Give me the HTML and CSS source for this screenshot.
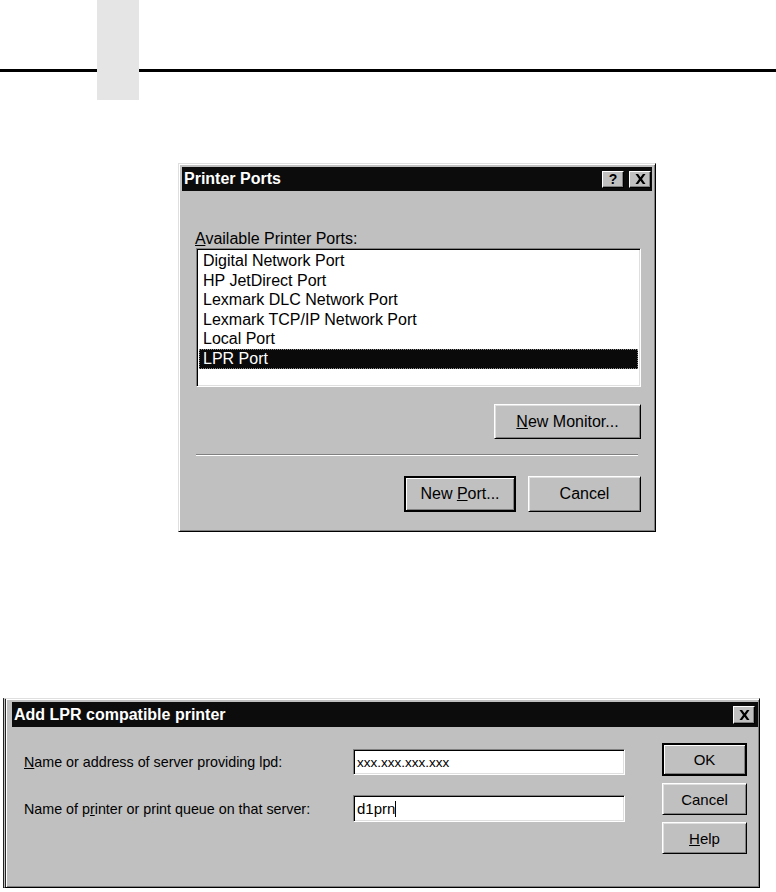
FILE: index.html
```html
<!DOCTYPE html>
<html lang="en">
<head>
  <meta charset="UTF-8">
  <title>Printer Ports</title>
  <link rel="stylesheet" href="styles.css">
</head>
<body>
  <div class="head">
    <div class="rule rule-left"></div>
    <div class="tab"></div>
    <div class="rule rule-right"></div>
  </div>

  <!-- Printer Ports dialog -->
  <div class="dlg dlg-ports">
    <div class="titlebar">
      <span class="title">Printer Ports</span>
      <div class="title-btns">
        <span class="tbtn tbtn-help">?</span>
        <span class="tbtn">
          <svg width="11" height="10" viewBox="0 0 11 10"><path d="M0.5 0h2.6l2.4 3.3 2.4-3.3h2.6L7 5l3.5 5H7.9L5.5 6.7 3.1 10H0.5L4 5z" fill="#000"/></svg>
        </span>
      </div>
    </div>
    <div class="ports-body">
      <div class="label"><u>A</u>vailable Printer Ports:</div>
      <ul class="listbox">
        <li>Digital Network Port</li>
        <li>HP JetDirect Port</li>
        <li>Lexmark DLC Network Port</li>
        <li>Lexmark TCP/IP Network Port</li>
        <li>Local Port</li>
        <li class="selected">LPR Port</li>
      </ul>
      <div class="row-end">
        <button class="btn btn-monitor"><u>N</u>ew Monitor...</button>
      </div>
      <div class="separator"></div>
      <div class="row-end row-actions">
        <button class="btn btn-default btn-port">New <u>P</u>ort...</button>
        <button class="btn btn-cancel">Cancel</button>
      </div>
    </div>
  </div>

  <!-- Add LPR compatible printer dialog -->
  <div class="dlg dlg-lpr">
    <div class="titlebar titlebar-lpr">
      <span class="title">Add LPR compatible printer</span>
      <span class="tbtn tbtn-close">
        <svg width="11" height="10" viewBox="0 0 11 10"><path d="M0.5 0h2.6l2.4 3.3 2.4-3.3h2.6L7 5l3.5 5H7.9L5.5 6.7 3.1 10H0.5L4 5z" fill="#000"/></svg>
      </span>
    </div>
    <div class="lpr-body">
      <div class="lpr-form">
        <label class="field-label"><u>N</u>ame or address of server providing lpd:</label>
        <div class="field field-ip">xxx.xxx.xxx.xxx</div>
        <label class="field-label">Name of p<u>r</u>inter or print queue on that server:</label>
        <div class="field">d1prn<span class="caret"></span></div>
      </div>
      <div class="lpr-btns">
        <button class="btn btn-default btn-ok">OK</button>
        <button class="btn btn-side">Cancel</button>
        <button class="btn btn-side"><u>H</u>elp</button>
      </div>
    </div>
  </div>
</body>
</html>
```

FILE: styles.css
```css
body {
  margin: 0;
  background-color: #fff;
  color: #000;
  font-family: "Liberation Sans", Arial, sans-serif;
}

.head {
  display: flex;
  height: 100px;
}

.rule {
  height: 72px;
  box-sizing: border-box;
  border-bottom: 3px solid #000;
}

.rule-left {
  width: 97px;
}

.rule-right {
  flex: 1;
}

.tab {
  width: 42px;
  background-color: #e5e5e5;
}

/* window frame */
.dlg {
  box-sizing: border-box;
  background-color: #c0c0c0;
  border: 1px solid;
  border-color: #dfdfdf #000 #000 #dfdfdf;
  box-shadow: inset 1px 1px #fff, inset -1px -1px #808080;
  padding: 3px;
}

.titlebar {
  display: flex;
  align-items: center;
  justify-content: space-between;
  height: 24px;
  padding: 0 1px 0 2px;
  background-color: #0c0c0c;
  color: #fff;
  font-weight: bold;
  font-size: 16px;
}

.title-btns {
  display: flex;
  gap: 5px;
}

.tbtn {
  display: flex;
  align-items: center;
  justify-content: center;
  width: 22px;
  height: 17px;
  box-sizing: border-box;
  background-color: #c0c0c0;
  color: #000;
  border: 1px solid;
  border-color: #fff #000 #000 #fff;
  box-shadow: inset -1px -1px #808080;
  font-size: 14px;
  font-weight: bold;
}

/* Printer Ports */
.dlg-ports {
  width: 478px;
  height: 369px;
  margin: 63px 0 0 178px;
}

.ports-body {
  padding: 38px 11px 0 14px;
  font-size: 16px;
}

.label {
  line-height: 19px;
  margin-left: -1px;
}

.listbox {
  list-style: none;
  margin: 0;
  padding: 2px 2px 0;
  height: 139px;
  box-sizing: border-box;
  background-color: #fff;
  border: 1px solid;
  border-color: #808080 #fff #fff #808080;
  box-shadow: inset 1px 1px #000, inset -1px -1px #dfdfdf;
}

.listbox li {
  height: 19.6px;
  line-height: 19.6px;
  padding-left: 4px;
  white-space: nowrap;
}

.listbox li.selected {
  background-color: #0a0a0a;
  color: #fff;
  outline: 1px dotted #888;
  outline-offset: -1px;
}

.row-end {
  display: flex;
  justify-content: flex-end;
}

.btn {
  box-sizing: border-box;
  background-color: #c0c0c0;
  color: #000;
  font-family: "Liberation Sans", Arial, sans-serif;
  font-size: 16px;
  padding: 0;
  border: 1px solid;
  border-color: #fff #000 #000 #fff;
  box-shadow: inset 1px 1px #dfdfdf, inset -1px -1px #808080;
}

.btn-default {
  border: 2px solid #000;
  box-shadow: inset 1px 1px #fff, inset -1px -1px #808080;
}

.btn-monitor {
  width: 147px;
  height: 35px;
  margin-top: 17px;
}

.separator {
  height: 2px;
  margin: 15px 3px 0 0;
  border-top: 1px solid #808080;
  border-bottom: 1px solid #fff;
  box-sizing: border-box;
}

.row-actions {
  gap: 12px;
  margin-top: 20px;
}

.btn-port {
  width: 112px;
  height: 36px;
}

.btn-cancel {
  width: 113px;
  height: 36px;
}

/* Add LPR compatible printer */
.dlg-lpr {
  width: 757px;
  height: 190px;
  margin: 166px 0 0 3px;
  border-left: 3px double #222;
  padding: 3px 1px 3px 6px;
}

.titlebar-lpr {
  height: 25px;
  padding: 0 3px 0 2px;
}

.tbtn-close {
  height: 18px;
}

.lpr-body {
  display: flex;
  justify-content: space-between;
  padding: 16px 11px 0 12px;
  font-size: 14.3px;
}

.lpr-form {
  display: grid;
  grid-template-columns: 1fr 272px;
  grid-template-rows: 26px 27px;
  row-gap: 20px;
  align-items: center;
  width: 601px;
  margin-top: 6px;
}

.field {
  height: 100%;
  box-sizing: border-box;
  display: flex;
  align-items: center;
  padding-left: 3px;
  background-color: #fff;
  border: 1px solid;
  border-color: #808080 #fff #fff #808080;
  box-shadow: inset 1px 1px #000, inset -1px -1px #dfdfdf;
  font-size: 15px;
}

.field-ip {
  font-size: 13.5px;
}

.caret {
  display: inline-block;
  width: 1px;
  height: 16px;
  background-color: #000;
}

.lpr-btns {
  display: flex;
  flex-direction: column;
  gap: 7px;
  width: 85px;
}

.lpr-btns .btn {
  font-size: 15px;
}

.btn-ok {
  height: 33px;
}

.btn-side {
  height: 32px;
}
```
